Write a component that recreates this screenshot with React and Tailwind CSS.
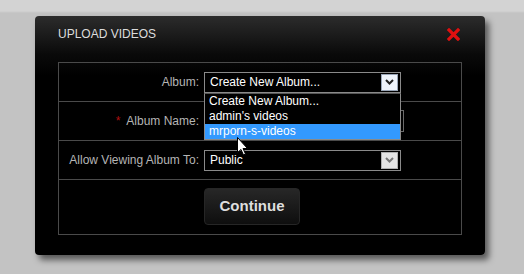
import React from 'react';

const Chevron = ({ color }) => (
  <svg width="9" height="6" viewBox="0 0 9 6">
    <path d="M1 1 L4.5 4.5 L8 1" fill="none" stroke={color} strokeWidth="2" />
  </svg>
);

const Select = ({ value, active }) => (
  <div className="flex h-[21px] w-[197px] items-center justify-between border border-[#8a8a8a] bg-black pl-[5px] pr-[2px] text-[12px] text-white">
    <span>{value}</span>
    <span
      className={
        active
          ? 'flex h-[17px] w-[17px] items-center justify-center border border-[#9aa6b8] bg-[#eef3fb]'
          : 'flex h-[17px] w-[17px] items-center justify-center border border-[#b0b0b0] bg-[#e4e4e4]'
      }
    >
      <Chevron color={active ? '#222' : '#777'} />
    </span>
  </div>
);

const Row = ({ label, required, children, last }) => (
  <div className={last ? 'flex h-[39px] items-center' : 'flex h-[39px] items-center border-b border-[#4a4a4a]'}>
    <div className="w-[145px] pr-[5px] text-right text-[12px] text-[#b5b5b5]">
      {required && <span className="mr-[6px] text-[#b01010]">*</span>}
      {label}
    </div>
    {children}
  </div>
);

export default function App() {
  const albums = ['Create New Album...', "admin's videos", 'mrporn-s-videos'];

  return (
    <div className="h-[274px] w-[524px] overflow-hidden bg-[linear-gradient(#d3d3d3_0,#d3d3d3_11px,#c3c3c3_13px,#c3c3c3)] pl-[35px] pt-[16px] font-['Liberation_Sans',Arial,sans-serif]">
      <div className="relative h-[239px] w-[450px] rounded-[4px] bg-[linear-gradient(#2c2c2c_0,#0a0a0a_38px,#000_60px)] shadow-[4px_5px_6px_rgba(0,0,0,0.55)]">
        <div className="flex h-[46px] items-start justify-between pl-[23px] pr-[25px] pt-[11px]">
          <span className="text-[12px] leading-[14px] text-[#dcdcdc]">UPLOAD VIDEOS</span>
          <svg className="mt-[1px]" width="13" height="13" viewBox="0 0 13 13">
            <path d="M2 2 L11 11 M11 2 L2 11" stroke="#e01010" strokeWidth="3.2" strokeLinecap="square" />
          </svg>
        </div>

        <div className="mx-[23px] border border-[#4a4a4a]">
          <Row label="Album:">
            <div className="relative">
              <Select value="Create New Album..." active />
              <div className="absolute left-0 top-[21px] z-10 w-[197px] border border-[#8a8a8a] border-t-[#555] bg-black text-[12px] text-white">
                {albums.map((a, i) => (
                  <div
                    key={a}
                    className={i === 2 ? 'h-[15px] bg-[#3399ff] pl-[4px] leading-[15px]' : 'h-[15px] pl-[4px] leading-[15px]'}
                  >
                    {a}
                  </div>
                ))}
              </div>
              <svg className="absolute left-[33px] top-[65px] z-20" width="12" height="19" viewBox="0 0 12 19">
                <path d="M0.5 0.5 L0.5 15.5 L4 12.5 L6.5 18 L8.5 17 L6 11.5 L10.5 11.5 Z" fill="#fff" stroke="#000" strokeWidth="1" />
              </svg>
            </div>
          </Row>
          <Row label="Album Name:" required>
            <div className="h-[22px] w-[200px] border border-[#6a6a6a] bg-black" />
          </Row>
          <Row label="Allow Viewing Album To:">
            <Select value="Public" />
          </Row>
          <div className="flex h-[54px] items-start pl-[145px] pt-[8px]">
            <button
              type="button"
              className="h-[37px] w-[96px] rounded-[4px] border border-[#262626] bg-[linear-gradient(#272727,#0e0e0e)] text-[15px] font-bold text-[#dedede]"
            >
              Continue
            </button>
          </div>
        </div>
      </div>
    </div>
  );
}
